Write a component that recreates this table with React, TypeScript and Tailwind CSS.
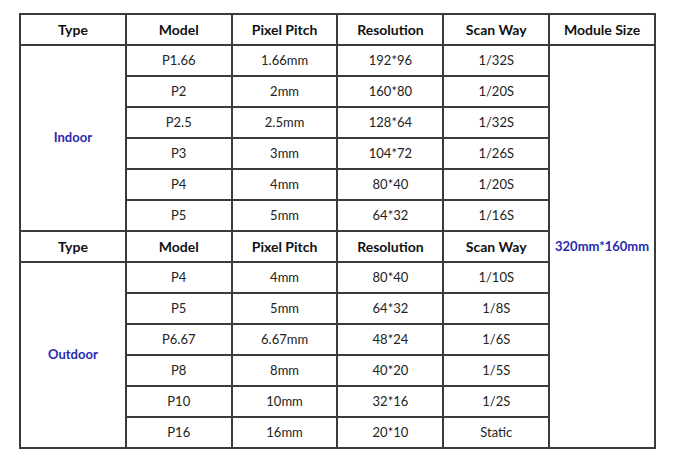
const indoor = [
  ["P1.66", "1.66mm", "192*96", "1/32S"],
  ["P2", "2mm", "160*80", "1/20S"],
  ["P2.5", "2.5mm", "128*64", "1/32S"],
  ["P3", "3mm", "104*72", "1/26S"],
  ["P4", "4mm", "80*40", "1/20S"],
  ["P5", "5mm", "64*32", "1/16S"],
];

const outdoor = [
  ["P4", "4mm", "80*40", "1/10S"],
  ["P5", "5mm", "64*32", "1/8S"],
  ["P6.67", "6.67mm", "48*24", "1/6S"],
  ["P8", "8mm", "40*20", "1/5S"],
  ["P10", "10mm", "32*16", "1/2S"],
  ["P16", "16mm", "20*10", "Static"],
];

const cell = "border-2 border-[#3b3b3b] h-[31px] p-0 text-center align-middle";
const head = `${cell} font-bold text-[14px] text-[#111]`;
const data = `${cell} text-[13px] text-[#222]`;
const label = `${cell} font-bold text-[13px] text-[#2a2ab0]`;

const HeaderRow = ({ last }: { last: boolean }) => (
  <tr>
    <td className={head}>Type</td>
    <td className={head}>Model</td>
    <td className={head}>Pixel Pitch</td>
    <td className={head}>Resolution</td>
    <td className={head}>Scan Way</td>
    {last && <td className={head}>Module Size</td>}
  </tr>
);

export default function App() {
  return (
    <div className="w-[680px] h-[464px] bg-white pt-[13px] pl-[19px]" style={{ fontFamily: "Lato, 'Open Sans', sans-serif" }}>
      <table className="table-fixed border-collapse w-[637px]">
        <tbody>
          <HeaderRow last />
          {indoor.map((r, i) => (
            <tr key={r[0]}>
              {i === 0 && (
                <td rowSpan={6} className={label}>
                  Indoor
                </td>
              )}
              {r.map((v) => (
                <td key={v} className={data}>
                  {v}
                </td>
              ))}
              {i === 0 && (
                <td rowSpan={13} className={label}>
                  320mm*160mm
                </td>
              )}
            </tr>
          ))}
          <HeaderRow last={false} />
          {outdoor.map((r, i) => (
            <tr key={r[0] + "o"}>
              {i === 0 && (
                <td rowSpan={6} className={label}>
                  Outdoor
                </td>
              )}
              {r.map((v) => (
                <td key={v} className={data}>
                  {v}
                </td>
              ))}
            </tr>
          ))}
        </tbody>
      </table>
    </div>
  );
}
